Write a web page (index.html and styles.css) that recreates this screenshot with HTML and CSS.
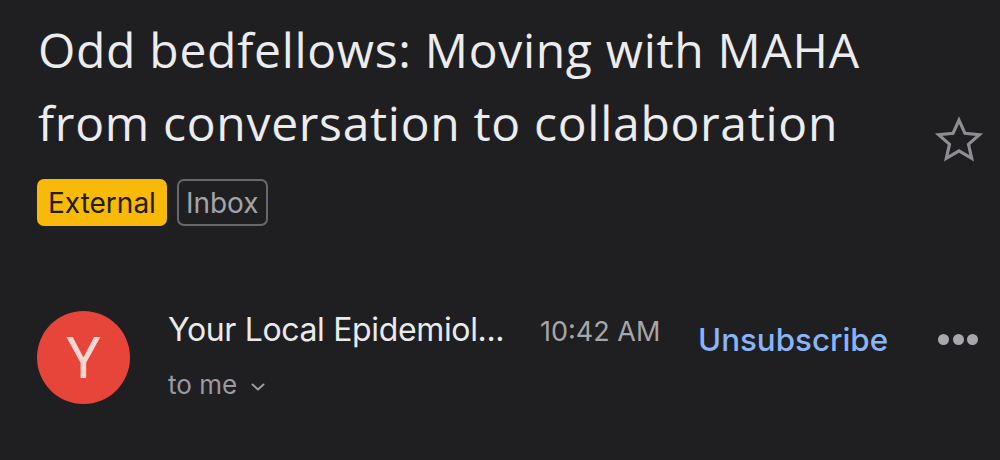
FILE: index.html
```html
<!DOCTYPE html>
<html>
<head>
<meta charset="utf-8">
<link rel="stylesheet" href="styles.css">
</head>
<body>
<div class="page">
  <div class="subject-row">
    <h1 class="subject">Odd bedfellows: Moving with MAHA<br>from conversation to collaboration</h1>
    <svg class="star" viewBox="0 0 24 24" width="52" height="52"><path d="M12 2.8l2.75 6.1 6.65.62-5.02 4.42 1.48 6.52L12 17.05l-5.86 3.41 1.48-6.52-5.02-4.42 6.65-.62z" fill="none" stroke="#8e8e92" stroke-width="1.45" stroke-linejoin="miter"/></svg>
  </div>
  <div class="labels">
    <span class="label label-external">External</span>
    <span class="label label-inbox">Inbox</span>
  </div>
  <div class="sender-row">
    <div class="avatar">Y</div>
    <div class="sender-info">
      <div class="sender-name">Your Local Epidemiol...</div>
      <div class="recipient">to me <svg class="chev" viewBox="0 0 14 8" width="14" height="8"><path d="M1.5 1.5l5.5 5 5.5-5" fill="none" stroke="#9a9aa0" stroke-width="2" stroke-linecap="round" stroke-linejoin="round"/></svg></div>
    </div>
    <div class="time">10:42 AM</div>
    <div class="unsub">Unsubscribe</div>
    <div class="more"><span></span><span></span><span></span></div>
  </div>
</div>
</body>
</html>
```

FILE: styles.css
```css
html, body {
  margin: 0;
  padding: 0;
  background: #1f1f22;
}
.page {
  width: 1000px;
  height: 460px;
  overflow: hidden;
  font-family: Inter, "Noto Sans", sans-serif;
}
.subject-row {
  display: flex;
  align-items: flex-end;
  justify-content: space-between;
  padding: 13px 15px 0 38px;
}
.subject {
  margin: 0;
  font-family: "Open Sans", sans-serif;
  font-weight: 400;
  font-size: 48px;
  line-height: 73px;
  color: #ececee;
  letter-spacing: 0.7px;
}
.star {
  display: block;
  margin-bottom: -7px;
}
.labels {
  display: flex;
  gap: 10px;
  padding: 20px 0 0 37px;
}
.label {
  box-sizing: border-box;
  height: 47px;
  display: flex;
  align-items: center;
  padding: 0 11px;
  border-radius: 7px;
  font-size: 28px;
}
.label-external {
  background: #f8b908;
  color: #221d0a;
}
.label-inbox {
  border: 2px solid #68686c;
  color: #a4a4a8;
  padding: 0 7px;
}
.sender-row {
  display: flex;
  align-items: flex-start;
  padding: 85px 0 0 37px;
}
.avatar {
  width: 93px;
  height: 93px;
  border-radius: 50%;
  background: #e8453a;
  color: #f6d7d2;
  font-family: Roboto, sans-serif;
  font-size: 58px;
  display: flex;
  align-items: center;
  justify-content: center;
  flex: none;
}
.sender-info {
  margin-left: 38px;
  width: 372px;
}
.sender-name {
  font-size: 32px;
  letter-spacing: -0.35px;
  color: #eaeaec;
  line-height: 38px;
  white-space: nowrap;
}
.recipient {
  font-size: 26px;
  color: #9a9aa0;
  line-height: 36px;
  margin-top: 18px;
  display: flex;
  align-items: center;
  gap: 14px;
}
.chev { margin-top: 4px; }
.time {
  font-size: 27px;
  color: #a6a6aa;
  line-height: 40px;
  margin-top: 1px;
  width: 158px;
}
.unsub {
  font-size: 31.3px;
  color: #8ab4f8;
  font-weight: 500;
  line-height: 50px;
  margin-top: 4px;
  width: 240px;
}
.more {
  display: flex;
  gap: 3.5px;
  padding-top: 22.5px;
}
.more span {
  width: 11px;
  height: 11px;
  border-radius: 50%;
  background: #a8a8ac;
}
```
